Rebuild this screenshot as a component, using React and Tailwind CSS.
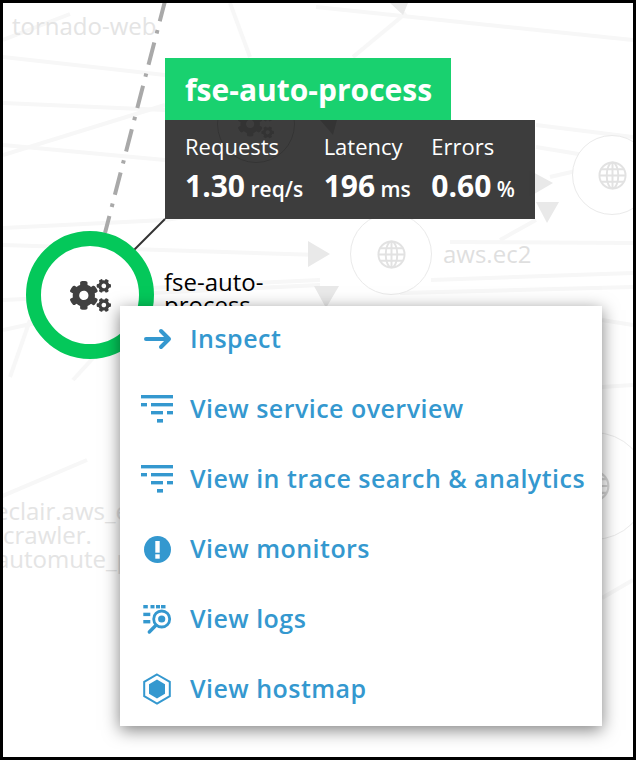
import React from "react";
import { FaCogs } from "react-icons/fa";

// faint edges of the service map, in page coordinates
const edges = [
  "M3 57L165 75", "M3 103L165 110", "M3 145L165 160", "M3 155L165 105", "M3 228L165 220",
  "M3 245L320 255", "M3 300L320 285", "M230 3L250 57", "M316 7L633 40", "M406 13L353 57",
  "M73 380L146 300", "M3 40L70 14", "M0 497L87 460", "M10 377L30 320", "M536 125L633 137",
  "M536 147L633 163", "M450 242L633 243", "M431 280L633 273", "M400 293L633 287", "M602 320L633 325",
  "M550 177L580 170", "M500 240L536 220", "M602 387L633 385", "M602 598L633 580", "M165 220L300 200",
  "M150 288L320 280", "M3 330L40 322",
];

const triangles = [
  { points: "308,241 330,254 308,267", fill: "#e9e9e9" },
  { points: "314,286 339,286 326,308", fill: "#e9e9e9" },
  { points: "529,170 553,183 529,197", fill: "#e9e9e9" },
  { points: "536,202 559,202 547,223", fill: "#e9e9e9" },
  { points: "390,3 408,3 403,15", fill: "#e9e9e9" },
  { points: "320,120 337,120 333,135", fill: "#555555" },
];

function Globe({ size, color }) {
  return (
    <svg width={size} height={size} viewBox="0 0 30 30" fill="none" stroke={color} strokeWidth="2">
      <circle cx="15" cy="15" r="13.5" />
      <ellipse cx="15" cy="15" rx="6" ry="13.5" />
      <path d="M15 1.5V28.5M1.5 15H28.5M3.5 8.5H26.5M3.5 21.5H26.5" />
    </svg>
  );
}

function GhostNode({ className, children }) {
  return (
    <div className={`absolute rounded-full border flex items-center justify-center ${className}`}>
      {children}
    </div>
  );
}

function ArrowIcon() {
  return (
    <svg width="34" height="24" viewBox="0 0 34 24" fill="none" stroke="#3498cf" strokeWidth="4" strokeLinecap="round" strokeLinejoin="round">
      <path d="M6 12H29M21 4L29 12L21 20" />
    </svg>
  );
}

function FilterIcon() {
  return (
    <svg width="34" height="30" viewBox="0 0 34 30" fill="#3498cf">
      <rect x="1" y="1" width="32" height="3.4" />
      <rect x="1" y="9" width="6" height="3.4" />
      <rect x="11" y="9" width="22" height="3.4" />
      <rect x="11" y="17" width="12" height="3.4" />
      <rect x="27" y="17" width="6" height="3.4" />
      <rect x="17" y="25" width="6" height="3.6" />
    </svg>
  );
}

function AlertIcon() {
  return (
    <svg width="27" height="27" viewBox="0 0 27 27">
      <circle cx="13.5" cy="13.5" r="13.5" fill="#3498cf" />
      <rect x="11.3" y="5" width="4.4" height="11.7" fill="white" />
      <rect x="11.3" y="18.3" width="4.4" height="4.4" fill="white" />
    </svg>
  );
}

function LogsIcon() {
  return (
    <svg width="34" height="32" viewBox="0 0 34 32" fill="#3498cf">
      <rect x="3.3" y="2" width="4.5" height="3.4" />
      <rect x="10.5" y="2" width="4" height="3.4" />
      <rect x="16" y="2" width="4" height="3.4" />
      <rect x="21" y="2" width="4.5" height="3.4" />
      <rect x="3.3" y="9.7" width="7" height="3.4" />
      <rect x="3.3" y="17" width="7" height="3.4" />
      <circle cx="21.7" cy="16" r="8" fill="none" stroke="#3498cf" strokeWidth="2.8" />
      <circle cx="21.7" cy="16" r="3.6" />
      <path d="M15.7 22.5L9.3 29" fill="none" stroke="#3498cf" strokeWidth="3.4" strokeLinecap="round" />
    </svg>
  );
}

function HexIcon() {
  return (
    <svg width="34" height="32" viewBox="0 0 34 32" fill="#3498cf">
      <path d="M17 1.5L29.8 8.8V23.2L17 30.5L4.2 23.2V8.8Z" fill="none" stroke="#3498cf" strokeWidth="2" />
      <path d="M17 6.5L25 11.2V20.8L17 25.5L9 20.8V11.2Z" />
    </svg>
  );
}

const menuItems = [
  { label: "Inspect", icon: <ArrowIcon /> },
  { label: "View service overview", icon: <FilterIcon /> },
  { label: "View in trace search & analytics", icon: <FilterIcon /> },
  { label: "View monitors", icon: <AlertIcon /> },
  { label: "View logs", icon: <LogsIcon /> },
  { label: "View hostmap", icon: <HexIcon /> },
];

const stats = [
  { label: "Requests", value: "1.30", unit: "req/s" },
  { label: "Latency", value: "196", unit: "ms" },
  { label: "Errors", value: "0.60", unit: "%" },
];

export default function App() {
  return (
    <div className="w-[636px] h-[760px] border-[3px] border-black bg-white overflow-hidden font-['Open_Sans',sans-serif]">
      <div className="relative w-[630px] h-[754px] overflow-hidden">
        {/* map backdrop */}
        <svg className="absolute inset-0" width="630" height="754" viewBox="3 3 630 754" fill="none">
          {edges.map((d) => (
            <path key={d} d={d} stroke="#f7f7f7" strokeWidth="4" />
          ))}
          {triangles.map((t) => (
            <polygon key={t.points} points={t.points} fill={t.fill} />
          ))}
          <path d="M165 1L105 233" stroke="#a9a9a9" strokeWidth="4" strokeDasharray="23 9 3.5 9.3" strokeDashoffset="2" />
          <path d="M165 219L134 250" stroke="#333333" strokeWidth="2" />
        </svg>

        <GhostNode className="left-[214px] top-[82px] w-[78px] h-[78px] border-[#444444]">
          <FaCogs className="w-[36px] h-[36px] text-[#3c3c3c]" />
        </GhostNode>
        <GhostNode className="left-[347px] top-[210px] w-[82px] h-[82px] border-[#eaeaea] bg-white">
          <Globe size={29} color="#e2e2e2" />
        </GhostNode>
        <GhostNode className="left-[569px] top-[132px] w-[80px] h-[80px] border-[#eaeaea] bg-white">
          <Globe size={29} color="#e2e2e2" />
        </GhostNode>
        <GhostNode className="left-[537px] top-[429px] w-[108px] h-[108px] border-[#eaeaea] bg-white">
          <Globe size={32} color="#d8d8d8" />
        </GhostNode>

        <div className="absolute left-[9px] top-[7px] text-[24px] leading-[32px] text-[#e4e4e4]">tornado-web</div>
        <div className="absolute left-[440px] top-[235px] text-[24px] leading-[32px] text-[#dfdfdf]">aws.ec2</div>
        <div className="absolute left-[-5px] top-[496px] text-[24px] leading-[24px] text-[#e4e4e4] whitespace-nowrap">
          <div className="-ml-[3px]">eclair.aws_e</div>
          <div className="ml-[5px]">crawler.</div>
          <div className="-ml-[2px]">automute_p</div>
        </div>

        {/* selected node */}
        <div className="absolute left-[23px] top-[228px] w-[128px] h-[128px] rounded-full border-[15px] border-[#04c85a] bg-white flex items-center justify-center">
          <FaCogs className="w-[41px] h-[41px] text-[#404040]" />
        </div>
        <div className="absolute left-[161px] top-[267px] w-[120px] text-[24px] leading-[23px] text-black">fse-auto-process</div>

        {/* tooltip */}
        <div className="absolute left-[162px] top-[55px] text-white">
          <div className="w-[286px] h-[62px] bg-[#19d16f] flex items-center pl-[20px] text-[30px] font-bold">fse-auto-process</div>
          <div className="w-[370px] h-[99px] bg-[#333333]/95 flex gap-[20.5px] pl-[20px] pt-[11px]">
            {stats.map((s) => (
              <div key={s.label}>
                <div className="text-[22px] leading-[30px]">{s.label}</div>
                <div className="mt-[5px] leading-[40px] whitespace-nowrap">
                  <span className="text-[30px] font-bold">{s.value}</span>
                  <span className="text-[21px] font-semibold"> {s.unit}</span>
                </div>
              </div>
            ))}
          </div>
        </div>

        {/* context menu */}
        <div className="absolute left-[117px] top-[303px] w-[482px] h-[420px] bg-white flex flex-col shadow-[0_4px_16px_rgba(0,0,0,0.5)]">
          {menuItems.map((item) => (
            <div key={item.label} className="h-[70px] pb-[4px] flex items-center text-[#3498cf] text-[25px] font-semibold tracking-[0.47px] whitespace-nowrap">
              <div className="w-[34px] ml-[20px] mr-[16px] flex justify-center">{item.icon}</div>
              {item.label}
            </div>
          ))}
        </div>
      </div>
    </div>
  );
}
